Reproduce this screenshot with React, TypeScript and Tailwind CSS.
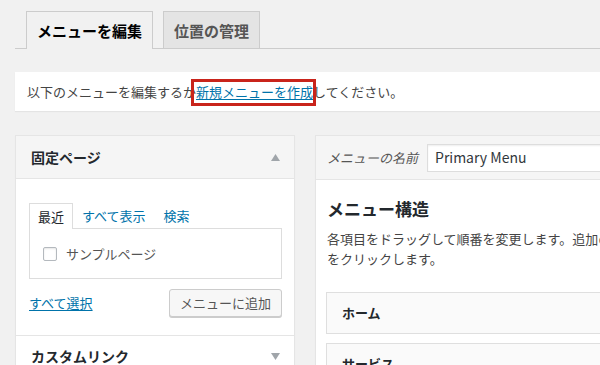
import React from "react";

const font = "font-['Noto_Sans_CJK_JP','Noto_Sans','Liberation_Sans',sans-serif]";

function Triangle({ up }: { up?: boolean }) {
  return (
    <svg width="9" height="7" viewBox="0 0 9 7" className="shrink-0">
      {up ? (
        <polygon points="4.5,0 9,7 0,7" fill="#a0a5aa" />
      ) : (
        <polygon points="0,0 9,0 4.5,7" fill="#a0a5aa" />
      )}
    </svg>
  );
}

export default function App() {
  return (
    <div className={`w-[600px] h-[365px] overflow-hidden bg-[#f1f1f1] text-[#444] ${font}`}>
      <div className="w-[660px] pl-[15px] pt-[11px]">
        {/* Top tabs */}
        <div className="flex gap-[10px] pl-[11px] border-b border-[#ccc]">
          <div className="h-[38px] -mb-px px-[10px] flex items-center border border-b-0 border-[#ccc] bg-[#f1f1f1] text-[15px] font-bold text-black leading-none">
            メニューを編集
          </div>
          <div className="h-[38px] -mb-px px-[10px] flex items-center border border-[#ccc] bg-[#e4e4e4] text-[15px] font-bold text-[#555] leading-none">
            位置の管理
          </div>
        </div>

        {/* Notice */}
        <div className="mt-[23px] h-[39px] bg-white shadow-[0_1px_1px_rgba(0,0,0,0.05)] pl-[12px] flex items-center text-[13px] leading-[20px] whitespace-nowrap">
          以下のメニューを編集するか
          <span className="relative inline-block">
            <a className="text-[#0073aa] underline underline-offset-2">新規メニューを作成</a>
            <span className="absolute -left-[5px] -right-[3px] -top-[3px] -bottom-[4px] border-[3px] border-[#c9241b]" />
          </span>
          してください。
        </div>

        {/* Panels */}
        <div className="mt-[24px] flex gap-[20px] items-start">
          {/* Left column */}
          <div className="w-[280px] shrink-0 border border-[#e5e5e5] bg-white shadow-[0_1px_1px_rgba(0,0,0,0.04)]">
            <div className="h-[43px] border-b border-[#e5e5e5] bg-[#f5f5f5] pl-[15px] pr-[14px] flex items-center justify-between">
              <span className="text-[14px] font-bold text-[#23282d]">固定ページ</span>
              <Triangle up />
            </div>
            <div className="pt-[24px] pl-[13px] pr-[12px] pb-[18px]">
              <div className="flex items-end text-[13px] leading-none">
                <div className="h-[26px] -mb-px px-[8px] flex items-center border border-b-0 border-[#ddd] bg-white text-[#23282d] relative z-10">
                  最近
                </div>
                <a className="px-[9px] text-[#0073aa] h-[25px] flex items-center">すべて表示</a>
                <a className="px-[9px] text-[#0073aa] h-[25px] flex items-center">検索</a>
              </div>
              <div className="h-[51px] border border-[#ddd] flex items-center pl-[13px]">
                <span className="w-[14px] h-[14px] border border-[#b4b9be] rounded-[2px] bg-white shadow-[inset_0_1px_2px_rgba(0,0,0,0.1)]" />
                <span className="ml-[9px] text-[13px] text-[#555]">サンプルページ</span>
              </div>
              <div className="mt-[10px] flex items-center justify-between">
                <a className="text-[13px] text-[#0073aa] underline underline-offset-2">すべて選択</a>
                <button className="h-[28px] px-[10px] border border-[#ccc] rounded-[3px] bg-[#f7f7f7] shadow-[0_1px_0_#ccc] text-[13px] text-[#555]">
                  メニューに追加
                </button>
              </div>
            </div>
            <div className="h-[42px] border-t border-[#e5e5e5] bg-white pl-[15px] pr-[14px] flex items-center justify-between">
              <span className="text-[14px] font-bold text-[#23282d]">カスタムリンク</span>
              <Triangle />
            </div>
          </div>

          {/* Right column */}
          <div className="w-[400px] shrink-0 border border-[#e5e5e5] bg-white shadow-[0_1px_1px_rgba(0,0,0,0.04)]">
            <div className="h-[44px] border-b border-[#e5e5e5] bg-[#f5f5f5] pl-[11px] flex items-center">
              <span className="text-[13px] italic text-[#555]">メニューの名前</span>
              <div className="ml-[9px] flex-1 h-[28px] border border-[#ddd] bg-white shadow-[inset_0_1px_2px_rgba(0,0,0,0.07)] pl-[7px] flex items-center text-[14px] text-[#32373c]">
                Primary Menu
              </div>
            </div>
            <div className="pt-[17px] pl-[11px] pb-[20px]">
              <h3 className="text-[17px] leading-[24px] font-bold text-[#23282d]">メニュー構造</h3>
              <p className="mt-[8px] text-[13px] leading-[20px] whitespace-nowrap">
                各項目をドラッグして順番を変更します。追加の設定オプションを表示するには、項目の右側にある矢印
                <br />
                をクリックします。
              </p>
              <div className="mt-[23px] -ml-px">
                <div className="h-[42px] border border-[#dfdfdf] bg-[#fafafa] px-[15px] flex items-center text-[13px] font-bold text-[#23282d]">
                  ホーム
                </div>
                <div className="mt-[9px] h-[42px] border border-[#dfdfdf] bg-[#fafafa] px-[15px] flex items-center text-[13px] font-bold text-[#23282d]">
                  サービス
                </div>
              </div>
            </div>
          </div>
        </div>
      </div>
    </div>
  );
}
